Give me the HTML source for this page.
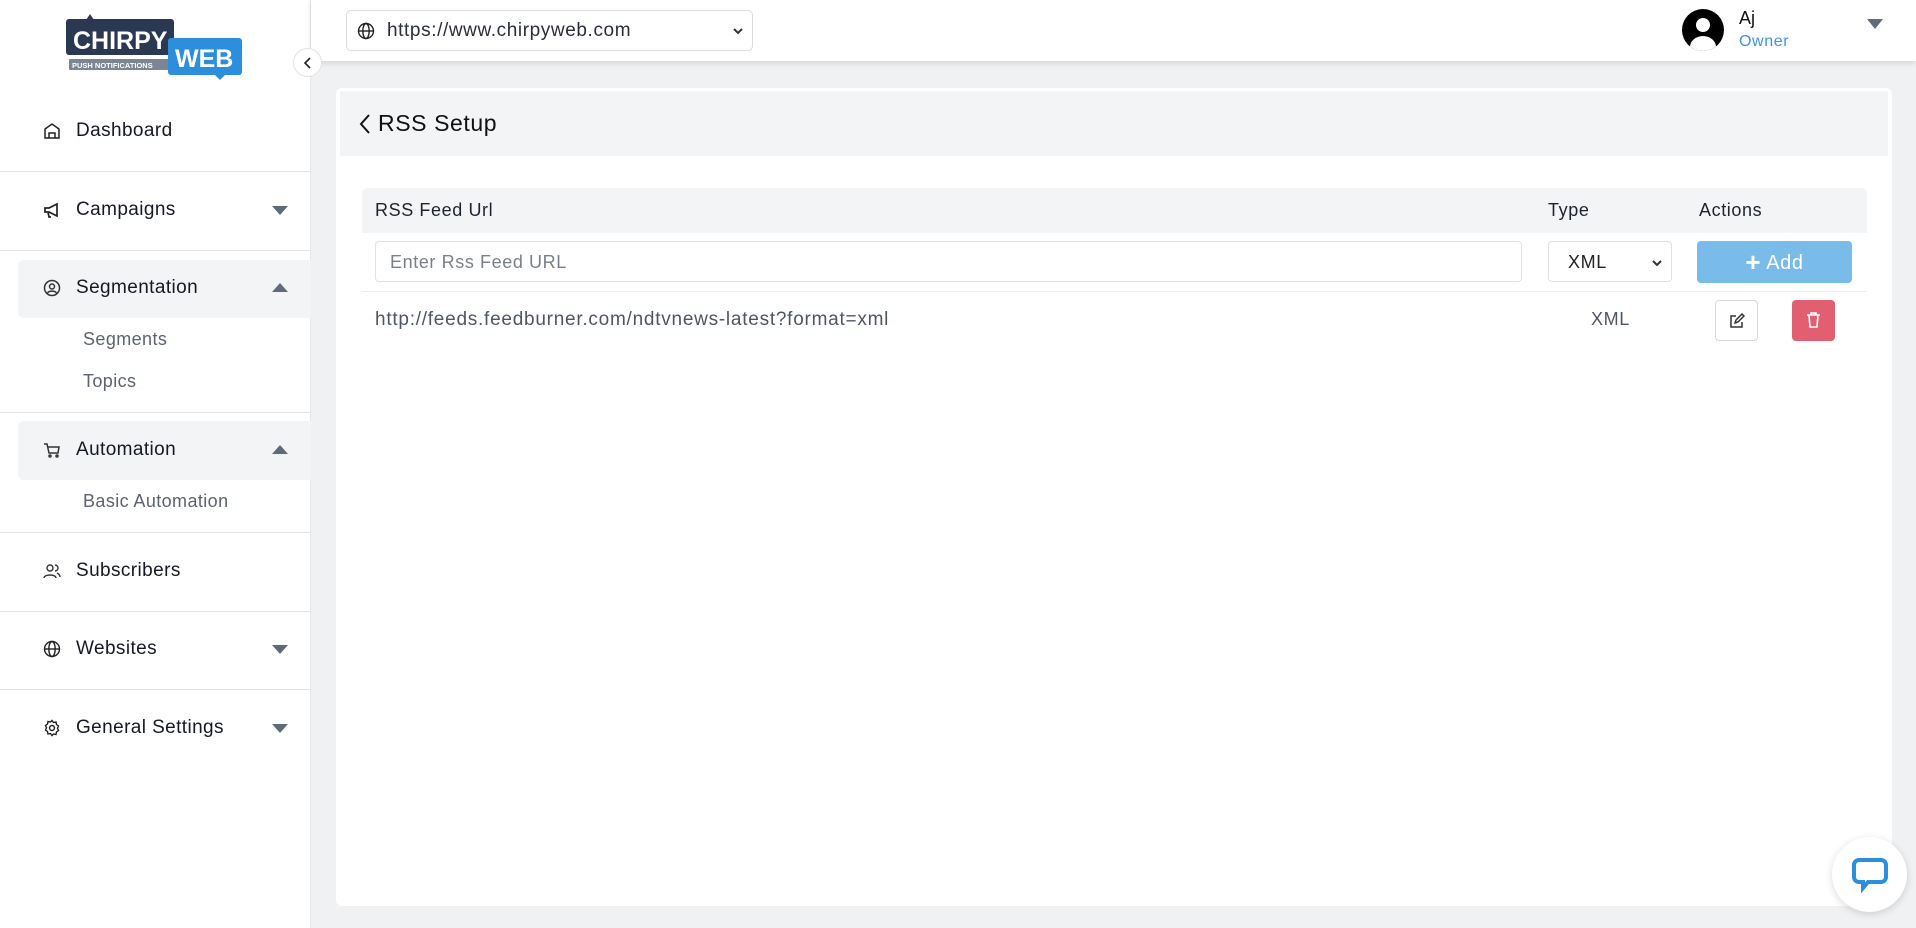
<!DOCTYPE html>
<html><head><meta charset="utf-8">
<style>
*{box-sizing:border-box;margin:0;padding:0}
body{width:1916px;height:928px;overflow:hidden;background:#f0f1f3;font-family:"Liberation Sans",sans-serif;color:#1f2330;position:relative}
.side{position:absolute;left:0;top:0;width:311px;height:928px;background:#fff;border-right:1px solid #e6e7ea}
.top{position:absolute;left:311px;top:0;width:1605px;height:61px;background:#fff;box-shadow:0 2px 6px rgba(0,0,0,.12)}
.item{position:absolute;left:0;width:311px;font-size:19px;letter-spacing:.4px;color:#151925;font-weight:500}
.item .ic{position:absolute;left:43px;top:50%;transform:translateY(-50%);width:18px;height:18px}
.item .t{position:absolute;left:76px;top:50%;transform:translateY(-50%)}
.item .car{position:absolute;left:272px;top:50%;margin-top:-4px;width:0;height:0;border-left:8px solid transparent;border-right:8px solid transparent;border-top:9px solid #5f6b78}
.item .car.up{border-top:0;border-bottom:9px solid #5f6b78;margin-top:-5px}
.div{position:absolute;left:0;width:311px;height:1px;background:#e3e4e7}
.act{position:absolute;left:18px;width:293px;background:#f3f4f6;border-radius:6px 0 0 6px}
.sub{position:absolute;left:83px;font-size:18px;letter-spacing:.4px;color:#5b6370}
.card{position:absolute;left:336px;top:88px;width:1556px;height:818px;background:#fff;border-radius:6px}
.hd{position:absolute;left:4px;top:3px;width:1548px;height:65px;background:#f3f4f6}
.tx{letter-spacing:.6px}
</style></head><body>
<div class="side">
  <svg style="position:absolute;left:64px;top:12px" width="180" height="70" viewBox="0 0 180 70">
    <path d="M22 8 L26 2 L30 8 Z" fill="#2b3852"/>
    <rect x="2" y="7" width="108" height="36" rx="3" fill="#2b3852"/>
    <rect x="5" y="47" width="100" height="11" rx="1" fill="#7b8593"/>
    <rect x="104" y="26" width="74" height="37" rx="3" fill="#2d8fdc"/>
    <path d="M150 62 L156 68 L162 62 Z" fill="#2d8fdc"/>
    <text x="9" y="37" style="font-family:'Liberation Sans';font-weight:700;font-size:25px" fill="#fff">CHIRPY</text>
    <text x="111" y="55" style="font-family:'Liberation Sans';font-weight:700;font-size:25px" fill="#fff">WEB</text>
    <text x="8" y="56" style="font-family:'Liberation Sans';font-weight:700;font-size:7.5px" fill="#fff">PUSH NOTIFICATIONS</text>
  </svg>
  <div class="item" style="top:111px;height:40px"><svg class="ic" viewBox="0 0 18 18" fill="none" stroke="#222" stroke-width="1.5"><path d="M2 16V7L9 2l7 5v9zM6 16v-5h6v5"/></svg><span class="t">Dashboard</span></div>
  <div class="div" style="top:171px"></div>
  <div class="item" style="top:190px;height:40px"><svg class="ic" viewBox="0 0 18 18" fill="none" stroke="#222" stroke-width="1.7"><path d="M2 7h4l8-4v12l-8-4H2zM5 11l1 5h2"/></svg><span class="t">Campaigns</span><span class="car"></span></div>
  <div class="div" style="top:250px"></div>
  <div class="act" style="top:260px;height:58px"></div>
  <div class="item" style="top:268px;height:40px"><svg class="ic" viewBox="0 0 18 18" fill="none" stroke="#333" stroke-width="1.5"><circle cx="9" cy="9" r="7.5"/><circle cx="9" cy="7.5" r="2.5"/><path d="M4.5 14c1.5-2.5 7.5-2.5 9 0"/></svg><span class="t">Segmentation</span><span class="car up"></span></div>
  <div class="sub" style="top:329px">Segments</div>
  <div class="sub" style="top:371px">Topics</div>
  <div class="div" style="top:412px"></div>
  <div class="act" style="top:421px;height:59px"></div>
  <div class="item" style="top:430px;height:40px"><svg class="ic" viewBox="0 0 18 18" fill="none" stroke="#333" stroke-width="1.5"><path d="M1 3h3l2 9h9l1-6H5"/><circle cx="7" cy="15" r="1"/><circle cx="14" cy="15" r="1"/></svg><span class="t">Automation</span><span class="car up"></span></div>
  <div class="sub" style="top:491px">Basic Automation</div>
  <div class="div" style="top:532px"></div>
  <div class="item" style="top:551px;height:40px"><svg class="ic" viewBox="0 0 18 18" fill="none" stroke="#333" stroke-width="1.4"><circle cx="7" cy="6" r="3"/><path d="M1 16c0-4 12-4 12 0M12 3a3 3 0 010 6M14 11c2 1 3 2 3 4"/></svg><span class="t">Subscribers</span></div>
  <div class="div" style="top:611px"></div>
  <div class="item" style="top:629px;height:40px"><svg class="ic" viewBox="0 0 18 18" fill="none" stroke="#222" stroke-width="1.4"><circle cx="9" cy="9" r="7.5"/><ellipse cx="9" cy="9" rx="3.2" ry="7.5"/><path d="M1.5 9h15"/></svg><span class="t">Websites</span><span class="car"></span></div>
  <div class="div" style="top:689px"></div>
  <div class="item" style="top:708px;height:40px"><svg class="ic" viewBox="0 0 18 18" fill="none" stroke="#222" stroke-width="1.4"><circle cx="9" cy="9" r="2.5"/><path d="M9 1.5l1.5 2 2.5-.5.5 2.5 2 1.5-1 2.3 1 2.2-2 1.5-.5 2.5-2.5-.5L9 16.5l-1.5-2-2.5.5-.5-2.5-2-1.5 1-2.2-1-2.3 2-1.5.5-2.5 2.5.5z"/></svg><span class="t">General Settings</span><span class="car"></span></div>
</div>
<div class="top">
  <div style="position:absolute;left:35px;top:10px;width:407px;height:41px;border:1px solid #dadce0;border-radius:5px;font-size:19px;color:#2a2e38">
    <svg style="position:absolute;left:10px;top:11px" width="18" height="18" viewBox="0 0 18 18" fill="none" stroke="#222" stroke-width="1.4"><circle cx="9" cy="9" r="7.5"/><ellipse cx="9" cy="9" rx="3.2" ry="7.5"/><path d="M1.5 9h15"/></svg>
    <span class="tx" style="position:absolute;left:40px;top:9px">https://www.chirpyweb.com</span>
    <svg style="position:absolute;right:8px;top:15px" width="12" height="10" viewBox="0 0 12 10" fill="none" stroke="#333" stroke-width="2"><path d="M2 3l4 4 4-4"/></svg>
  </div>
</div>
<div style="position:absolute;left:293px;top:48px;width:29px;height:29px;border-radius:50%;background:#fff;border:1px solid #e3e4e7"><svg style="position:absolute;left:8px;top:7px" width="12" height="14" viewBox="0 0 12 14" fill="none" stroke="#222" stroke-width="1.6"><path d="M8 2L3 7l5 5"/></svg></div>
<svg style="position:absolute;left:1682px;top:9px" width="42" height="42" viewBox="0 0 42 42"><clipPath id="c"><circle cx="21" cy="21" r="21"/></clipPath><circle cx="21" cy="21" r="21" fill="#000"/><g clip-path="url(#c)" fill="#fff"><circle cx="21" cy="16" r="7"/><ellipse cx="21" cy="38" rx="13" ry="11"/></g></svg>
<div style="position:absolute;left:1739px;top:8px;font-size:18px;color:#111">Aj</div>
<div class="tx" style="position:absolute;left:1739px;top:33px;font-size:16px;color:#3d94e0">Owner</div>
<div style="position:absolute;left:1867px;top:19px;border-left:8px solid transparent;border-right:8px solid transparent;border-top:10px solid #5f6b78"></div>
<div class="card">
  <div class="hd">
    <svg style="position:absolute;left:18px;top:22px" width="14" height="22" viewBox="0 0 14 22" fill="none" stroke="#111" stroke-width="2"><path d="M11 2L3 11l8 9"/></svg>
    <div class="tx" style="position:absolute;left:38px;top:19px;font-size:23px;color:#111">RSS Setup</div>
  </div>
  <div style="position:absolute;left:26px;top:100px;width:1505px;height:45px;background:#f3f4f6;border-radius:6px 6px 0 0;font-size:18px;color:#1f2330">
    <span class="tx" style="position:absolute;left:13px;top:12px">RSS Feed Url</span>
    <span class="tx" style="position:absolute;left:1186px;top:12px">Type</span>
    <span class="tx" style="position:absolute;left:1337px;top:12px">Actions</span>
  </div>
  <div style="position:absolute;left:39px;top:153px;width:1147px;height:41px;border:1px solid #dfe1e5;border-radius:4px;font-size:18px;color:#7a808a"><span class="tx" style="position:absolute;left:14px;top:10px">Enter Rss Feed URL</span></div>
  <div style="position:absolute;left:1212px;top:153px;width:124px;height:41px;border:1px solid #dfe1e5;border-radius:4px;font-size:18px;color:#222"><span class="tx" style="position:absolute;left:19px;top:10px">XML</span><svg style="position:absolute;right:8px;top:16px" width="12" height="10" viewBox="0 0 12 10" fill="none" stroke="#333" stroke-width="2"><path d="M2 3l4 4 4-4"/></svg></div>
  <div class="tx" style="position:absolute;left:1361px;top:153px;width:155px;height:42px;background:#79bbe9;border-radius:4px;color:#fff;font-size:20px;text-align:center;line-height:42px"><b style="font-size:26px;vertical-align:-2px">+</b> Add</div>
  <div style="position:absolute;left:26px;top:203px;width:1505px;height:1px;background:#eceef0"></div>
  <div style="position:absolute;left:39px;top:221px;font-size:19px;letter-spacing:.75px;color:#4f5663">http://feeds.feedburner.com/ndtvnews-latest?format=xml</div>
  <div class="tx" style="position:absolute;left:1255px;top:221px;font-size:18px;color:#4f5663">XML</div>
  <div style="position:absolute;left:1379px;top:212px;width:43px;height:41px;border:1px solid #d6d8dc;border-radius:4px"><svg style="position:absolute;left:13px;top:12px" width="16" height="16" viewBox="0 0 16 16" fill="none" stroke="#333" stroke-width="1.5"><path d="M7 3H2v11h11V9"/><path d="M6 10l1-3 6-6 2 2-6 6z"/></svg></div>
  <div style="position:absolute;left:1456px;top:212px;width:43px;height:41px;background:#e15f70;border-radius:4px"><svg style="position:absolute;left:14px;top:12px" width="15" height="16" viewBox="0 0 15 16" fill="none" stroke="#fff" stroke-width="1.6"><path d="M1 3h13M5 3V1h5v2M3 3l1 12h7l1-12"/></svg></div>
</div>
<div style="position:absolute;left:1832px;top:837px;width:75px;height:75px;border-radius:50%;background:#fff;box-shadow:0 2px 8px rgba(0,0,0,.15)"><svg style="position:absolute;left:19px;top:20px" width="38" height="36" viewBox="0 0 38 36" fill="none" stroke="#2d8fdc" stroke-width="4"><path d="M8 3h22a5 5 0 015 5v12a5 5 0 01-5 5H17l-5 6v-6H8a5 5 0 01-5-5V8a5 5 0 015-5z"/></svg></div>
</body></html>
